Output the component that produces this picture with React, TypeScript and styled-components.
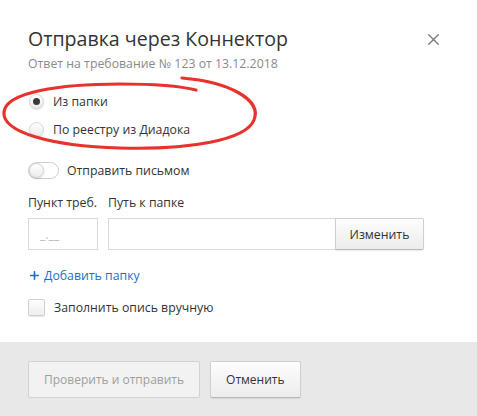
import React, { useState } from "react";
import styled, { createGlobalStyle } from "styled-components";
import { X, Plus } from "lucide-react";

const GlobalStyle = createGlobalStyle`
	html, body {
		margin: 0;
		padding: 0;
		background: #fff;
	}
	body {
		font-family: "Open Sans", "Noto Sans", Arial, sans-serif;
		color: #333;
	}
`;

const Modal = styled.div`
	position: relative;
	width: 477px;
	height: 416px;
	display: flex;
	flex-direction: column;
	background: #fff;
	overflow: hidden;
`;

const Body = styled.div`
	flex: 1;
	padding: 24px 30px 0 28px;
	display: flex;
	flex-direction: column;
`;

const Header = styled.div`
	display: flex;
	align-items: center;
	justify-content: space-between;
	height: 30px;
`;

const Title = styled.h1`
	margin: 0;
	font-size: 19.6px;
	font-weight: 400;
	line-height: 30px;
	color: #333;
`;

const Close = styled.button`
	border: none;
	background: none;
	padding: 0;
	margin-right: 4px;
	display: flex;
	color: #7a7a7a;
	cursor: pointer;
`;

const Subtitle = styled.div`
	font-size: 12.3px;
	line-height: 20px;
	color: #8a8a8a;
`;

const RadioGroup = styled.div`
	margin-top: 13px;
	display: flex;
	flex-direction: column;
`;

const Row = styled.label<{ $h?: number }>`
	display: flex;
	align-items: center;
	height: ${(p) => p.$h || 28}px;
	font-size: 12.3px;
	color: #333;
	cursor: pointer;
`;

const RadioCircle = styled.span<{ $checked?: boolean }>`
	width: 15px;
	height: 15px;
	box-sizing: border-box;
	border-radius: 50%;
	border: 1px solid #d6d6d6;
	background: linear-gradient(#fff, #ebebeb);
	box-shadow: 0 1px 1px rgba(0, 0, 0, 0.12);
	margin-left: 1px;
	margin-right: 9px;
	display: flex;
	align-items: center;
	justify-content: center;

	&::after {
		content: "";
		display: ${(p) => (p.$checked ? "block" : "none")};
		width: 7px;
		height: 7px;
		border-radius: 50%;
		background: #3a3a3a;
	}
`;

const ToggleTrack = styled.span`
	width: 31px;
	height: 17px;
	box-sizing: border-box;
	border-radius: 9px;
	border: 1px solid #cfcfcf;
	background: #fff;
	margin-right: 8px;
	display: flex;
	align-items: center;
`;

const ToggleKnob = styled.span`
	width: 15px;
	height: 15px;
	box-sizing: border-box;
	border-radius: 50%;
	border: 1px solid #d0d0d0;
	background: linear-gradient(#fff, #ececec);
	box-shadow: 0 1px 2px rgba(0, 0, 0, 0.15);
`;

const ToggleRow = styled(Row)`
	margin-top: 15px;
`;

const Fields = styled.div`
	margin-top: 11px;
	display: grid;
	grid-template-columns: 70px 316px;
	column-gap: 10px;
	row-gap: 5px;
`;

const FieldLabel = styled.div`
	font-size: 12.3px;
	line-height: 20px;
	color: #333;
	white-space: nowrap;
`;

const Input = styled.div`
	height: 32px;
	box-sizing: border-box;
	border: 1px solid #d9d9d9;
	background: #fff;
	display: flex;
	align-items: center;
	padding-left: 11px;
	font-size: 12px;
	color: #b5b5b5;
`;

const InputGroup = styled.div`
	display: flex;
`;

const PathInput = styled(Input)`
	flex: 1;
	border-right: none;
`;

const Button = styled.button<{ $disabled?: boolean }>`
	height: ${(p) => (p.$disabled !== undefined ? 37 : 32)}px;
	box-sizing: border-box;
	padding: 0 15px;
	border: 1px solid ${(p) => (p.$disabled ? "#d2d2d2" : "#cfcfcf")};
	border-bottom-color: ${(p) => (p.$disabled ? "#d2d2d2" : "#b8b8b8")};
	border-radius: 2px;
	background: ${(p) =>
		p.$disabled ? "#f2f2f2" : "linear-gradient(#fdfdfd, #ececec)"};
	box-shadow: ${(p) => (p.$disabled ? "none" : "0 1px 1px rgba(0,0,0,0.08)")};
	font-family: inherit;
	font-size: 12px;
	color: ${(p) => (p.$disabled ? "#9e9e9e" : "#333")};
	cursor: pointer;
`;

const SideButton = styled(Button)`
	width: 89px;
	border-radius: 0 2px 2px 0;
	padding: 0;
	font-size: 12.3px;
`;

const AddLink = styled.a`
	margin-top: 15px;
	display: flex;
	align-items: center;
	gap: 3px;
	height: 20px;
	font-size: 12.3px;
	color: #1f6dc5;
	text-decoration: none;
	cursor: pointer;
`;

const CheckBox = styled.span`
	width: 17px;
	height: 17px;
	box-sizing: border-box;
	border-radius: 2px;
	border: 1px solid #d0d0d0;
	background: linear-gradient(#fff, #ededed);
	box-shadow: 0 1px 1px rgba(0, 0, 0, 0.1);
	margin-right: 9px;
`;

const CheckRow = styled(Row)`
	margin-top: 12px;
	height: 20px;
`;

const Footer = styled.div`
	height: 74px;
	background: #e8e8e8;
	padding: 19px 28px 0;
	box-sizing: border-box;
	display: flex;
	align-items: flex-start;
	gap: 10px;
`;

const Annotation = styled.svg`
	position: absolute;
	left: 0;
	top: 70px;
	pointer-events: none;
`;

const App = () => {
	const [source, setSource] = useState("folder");

	return (
		<Modal>
			<GlobalStyle />
			<Body>
				<Header>
					<Title>Отправка через Коннектор</Title>
					<Close>
						<X size={19} strokeWidth={1.7} />
					</Close>
				</Header>
				<Subtitle>Ответ на требование № 123 от 13.12.2018</Subtitle>

				<RadioGroup>
					<Row onClick={() => setSource("folder")}>
						<RadioCircle $checked={source === "folder"} />
						Из папки
					</Row>
					<Row onClick={() => setSource("diadoc")}>
						<RadioCircle $checked={source === "diadoc"} />
						По реестру из Диадока
					</Row>
				</RadioGroup>

				<ToggleRow $h={24}>
					<ToggleTrack>
						<ToggleKnob />
					</ToggleTrack>
					Отправить письмом
				</ToggleRow>

				<Fields>
					<FieldLabel>Пункт треб.</FieldLabel>
					<FieldLabel>Путь к папке</FieldLabel>
					<Input>_.__</Input>
					<InputGroup>
						<PathInput />
						<SideButton>Изменить</SideButton>
					</InputGroup>
				</Fields>

				<AddLink>
					<Plus size={13} strokeWidth={3} />
					Добавить папку
				</AddLink>

				<CheckRow>
					<CheckBox />
					Заполнить опись вручную
				</CheckRow>
			</Body>

			<Footer>
				<Button $disabled={true}>Проверить и отправить</Button>
				<Button $disabled={false}>Отменить</Button>
			</Footer>

			{/* red hand-drawn marker around the radio options */}
			<Annotation width="270" height="90" viewBox="0 0 270 90">
				<path
					d="M182 8 C 230 12, 262 30, 254 50 C 246 70, 190 80, 120 78 C 50 76, 2 62, 4 42 C 6 22, 60 14, 120 14 C 150 14, 180 16, 196 20"
					fill="none"
					stroke="#e8322e"
					strokeWidth="3.2"
					strokeLinecap="round"
				/>
			</Annotation>
		</Modal>
	);
};

export default App;
